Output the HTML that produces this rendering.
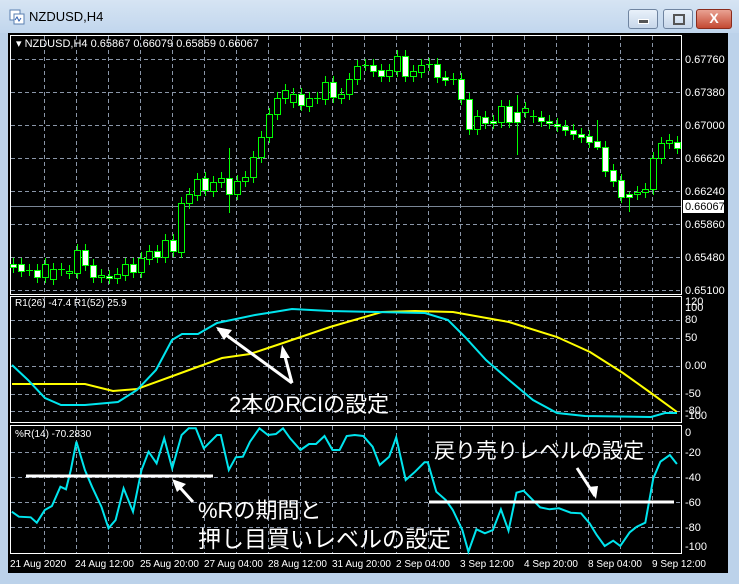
<!DOCTYPE html>
<html><head><meta charset="utf-8"><style>
*{margin:0;padding:0}
body{width:739px;height:584px;overflow:hidden;background:#bcd2ea;font-family:"Liberation Sans","Noto Sans CJK JP",sans-serif;position:relative}
#tb{position:absolute;left:0;top:0;width:739px;height:33px;background:linear-gradient(#d6e4f3,#c1d6ed)}
#chart{position:absolute;left:8px;top:33px;width:720px;height:540px;background:#000}
.btn{position:absolute;top:9px;height:18px;border:1px solid #6f84a0;border-radius:3px;background:linear-gradient(#e9f1fa,#c7d7ea)}
</style></head><body>
<div id="tb"></div>
<svg style="position:absolute;left:9px;top:9px" width="16" height="16"><rect x="1" y="1" width="10" height="10" fill="#fff" stroke="#5a7fb0"/><rect x="5" y="5" width="10" height="10" fill="#fff" stroke="#5a7fb0"/><path d="M6 11l2-3 2 4 2-3" stroke="#3060b0" fill="none"/></svg>
<div style="position:absolute;left:29px;top:9px;font-size:13px;color:#000">NZDUSD,H4</div>
<div class="btn" style="left:628px;width:28px"><div style="position:absolute;left:9px;top:9px;width:9px;height:3px;background:#555;border:1px solid #fff"></div></div>
<div class="btn" style="left:663px;width:28px"><div style="position:absolute;left:9px;top:4px;width:8px;height:7px;border:2px solid #555"></div></div>
<div class="btn" style="left:696px;width:34px;background:linear-gradient(#e9a293,#c44a33);border-color:#8a2b1c"><div style="position:absolute;left:0;width:34px;top:0;text-align:center;color:#fff;font-weight:bold;font-size:14px">X</div></div>
<div id="chart"></div>
<svg id="s" style="position:absolute;left:0;top:0" width="739" height="584" font-family="Liberation Sans, sans-serif">
<g fill="none" stroke="#fff" stroke-width="1">
<rect x="10.5" y="35.5" width="671" height="259"/>
<rect x="10.5" y="296.5" width="671" height="126"/>
<rect x="10.5" y="425.5" width="671" height="128"/>
</g>
<g id="grid" stroke="#8a96a8" stroke-dasharray="4,3" stroke-width="1"></g>
<line x1="11" y1="206.5" x2="681" y2="206.5" stroke="#7a8696"/>
<g id="cand"></g>
<polyline id="yel" fill="none" stroke="#ffff00" stroke-width="2"/>
<polyline id="cy1" fill="none" stroke="#00e5ee" stroke-width="2"/>
<polyline id="cy2" fill="none" stroke="#00e5ee" stroke-width="2"/>
<g fill="#fff" font-size="11">
<text x="16" y="47">▾ NZDUSD,H4  0.65867 0.66079 0.65859 0.66067</text>
<text x="15" y="306" font-size="10">R1(26) -47.4  R1(52) 25.9</text>
<text x="15" y="437" font-size="10">%R(14) -70.2830</text>
<g id="lbl"></g>
<g id="tl" font-size="10"></g>
</g>
<rect x="683" y="200" width="41" height="13" fill="#fff"/>
<text x="685" y="210" font-size="11" fill="#000">0.66067</text>
<g stroke="#fff" stroke-width="3">
<line x1="26" y1="476" x2="213" y2="476"/><line x1="429" y1="502" x2="674" y2="502"/>
<line x1="218" y1="329" x2="292" y2="383"/><line x1="283" y1="349" x2="292" y2="383"/>
<line x1="175" y1="482" x2="193" y2="502"/><line x1="577" y1="468" x2="595" y2="496"/>
</g>
<g fill="#fff">
<polygon points="216,327 232,330 224,340"/><polygon points="282,345 290,358 280,358"/>
<polygon points="172,479 186,484 177,492"/><polygon points="596,499 588,487 598,486"/>
</g>
<g fill="#fff" font-family="Liberation Sans, Noto Sans CJK JP, sans-serif">
<text x="229" y="412" font-size="22">2本のRCIの設定</text>
<text x="198" y="518" font-size="22">%Rの期間と</text>
<text x="198" y="547" font-size="23">押し目買いレベルの設定</text>
<text x="434" y="458" font-size="21">戻り売りレベルの設定</text>
</g>
</svg>
<script>
var NS="http://www.w3.org/2000/svg";
function el(p,t,a){var e=document.createElementNS(NS,t);for(var k in a)e.setAttribute(k,a[k]);p.appendChild(e);return e;}
var g=document.getElementById('grid'),L=document.getElementById('lbl'),TL=document.getElementById('tl');
for(var x=44;x<=652;x+=32){[[36,294],[297,422],[426,553]].forEach(function(r){el(g,'line',{x1:x+.5,y1:r[0],x2:x+.5,y2:r[1]});});}
var pl=[["0.67760",59],["0.67380",92],["0.67000",125],["0.66620",158],["0.66240",191],["0.65860",224],["0.65480",257],["0.65100",290]];
pl.forEach(function(p){el(g,'line',{x1:11,y1:p[1]+.5,x2:681,y2:p[1]+.5});var t=el(L,'text',{x:685,y:p[1]+4});t.textContent=p[0];});
[[320,"80"],[338,"50"],[366,"0.00"],[394,"-50"],[411,"-80"]].forEach(function(p){el(g,'line',{x1:11,y1:p[0]+.5,x2:681,y2:p[0]+.5});});
[["120",305],["100",311],["80",323],["50",341],["0.00",369],["-50",397],["-80",414],["-100",419]].forEach(function(p){var t=el(L,'text',{x:685,y:p[1]});t.textContent=p[0];});
[[452,"-20"],[477,"-40"],[502,"-60"],[527,"-80"]].forEach(function(p){el(g,'line',{x1:11,y1:p[0]+.5,x2:681,y2:p[0]+.5});});
[["0",436],["-20",456],["-40",481],["-60",506],["-80",531],["-100",550]].forEach(function(p){var t=el(L,'text',{x:685,y:p[1]});t.textContent=p[0];});
["21 Aug 2020",10,"24 Aug 12:00",75,"25 Aug 20:00",140,"27 Aug 04:00",204,"28 Aug 12:00",268,"31 Aug 20:00",332,"2 Sep 04:00",396,"3 Sep 12:00",460,"4 Sep 20:00",524,"8 Sep 04:00",588,"9 Sep 12:00",652].forEach(function(v,i,a){if(i%2==0){var t=el(TL,'text',{x:a[i+1],y:567});t.textContent=v;}});
var C=[[264,267,0],[264,271,0],[270,270,0],[270,277,0],[277,264],[279,269],[270,269],[273,271],[273,250],[250,265,0],[265,277,0],[277,275],[276,278,0],[278,274],[275,264],[264,272,0],[272,258],[259,251],[251,257,0],[257,240],[240,251,0],[252,203],[203,194],[195,179],[178,190,0],[191,182],[182,178],[178,194,0,148,213],[194,181],[181,177],[177,157],[157,137],[137,114],[114,98],[98,90],[102,94],[94,105,0],[106,98],[98,98],[99,82],[82,97,0],[98,94],[94,79],[79,66],[65,65],[65,71,0],[70,76,0],[76,70],[71,56],[56,76,0],[76,71],[72,65],[64,65,0],[64,77,0],[77,80,0],[79,79],[79,99,0],[99,129,0],[129,116],[117,123,0],[121,123,0],[122,106],[106,122,0],[122,112,0,95,155],[112,108],[116,117,0],[117,121,0],[121,123,0],[124,126,0],[126,130,0],[130,134,0],[134,137,0],[136,142,0],[141,147,0,120,150],[147,171,0],[170,181,0],[180,197,0],[194,197,0,192,212],[194,192],[192,189],[189,158],[158,143],[143,140],[142,148,0]];
var cg=document.getElementById('cand');
C.forEach(function(c,i){var x=13+8*i,o=c[0],cl=c[1],top=Math.min(o,cl),bot=Math.max(o,cl);var hi=c[3]||top-6,lo=c[4]||bot+6;
el(cg,'line',{x1:x+.5,y1:hi,x2:x+.5,y2:lo,stroke:'#00ff00'});
if(bot-top<2){el(cg,'line',{x1:x-3,y1:top+.5,x2:x+4,y2:top+.5,stroke:'#00ff00'});}
else el(cg,'rect',{x:x-2.5,y:top+.5,width:6,height:bot-top,fill:(c[2]===0?'#fff':'#000'),stroke:'#00ff00'});});
function P(id,a){document.getElementById(id).setAttribute('points',a.map(function(p){return p.join(',');}).join(' '));}
P('yel',[[12,384],[85,384],[113,391],[137,389],[170,377],[222,358],[250,354],[283,343],[330,327],[382,312],[415,311],[453,312],[509,322],[557,337],[590,352],[623,373],[651,393],[677,412]]);
P('cy1',[[12,365],[28,380],[45,398],[61,405],[85,405],[118,402],[137,390],[156,370],[172,340],[182,334],[198,334],[217,323],[236,319],[255,315],[274,312],[292,309],[330,311],[377,312],[425,313],[448,320],[465,337],[486,360],[509,380],[533,400],[557,413],[585,416],[651,417],[665,413],[677,413]]);
var R=[[25,275],[40,290],[65,292],[78,308],[95,270],[110,258],[128,200],[140,208],[150,150],[162,65],[180,150],[195,200],[215,260],[230,325],[245,300],[262,205],[282,275],[300,150],[315,95],[332,130],[348,55],[365,145],[385,45],[400,25],[415,25],[432,85],[460,45],[468,45],[485,150],[500,112],[515,110],[530,65],[550,25],[568,45],[585,42],[600,25],[615,55],[637,90],[655,72],[670,72],[688,48],[705,90],[720,90],[735,48],[752,45],[770,48],[790,80],[805,135],[825,110],[840,52],[860,180],[880,155],[900,127],[907,127],[925,215],[945,240],[960,270],[980,330],[993,395],[1010,328],[1028,340],[1045,330],[1062,268],[1078,332],[1095,218],[1110,212],[1128,238],[1145,262],[1165,268],[1185,265],[1210,278],[1232,280],[1250,310],[1265,345],[1282,378],[1300,362],[1315,378],[1335,337],[1350,320],[1368,308],[1385,175],[1400,125],[1420,105],[1435,132]];
P('cy2',R.map(function(p){return [(p[0]/2.12).toFixed(1),(420+p[1]/3).toFixed(1)];}));
</script>
</body></html>
